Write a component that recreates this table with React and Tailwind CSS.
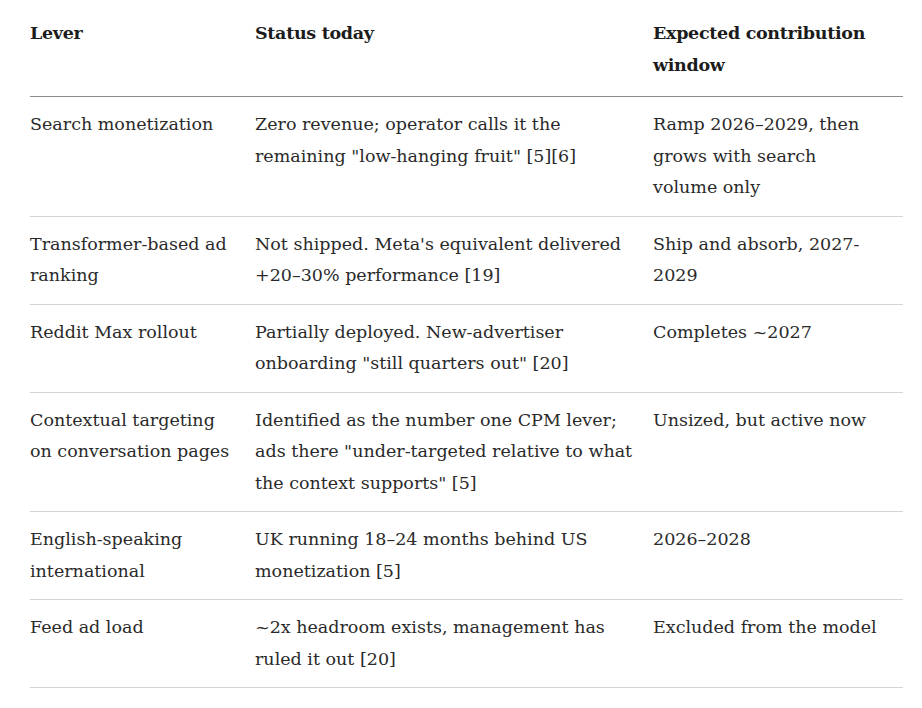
import React from "react";

const rows = [
  ["Search monetization", 'Zero revenue; operator calls it the remaining "low-hanging fruit" [5][6]', "Ramp 2026–2029, then grows with search volume only"],
  ["Transformer-based ad ranking", "Not shipped. Meta's equivalent delivered +20–30% performance [19]", "Ship and absorb, 2027-2029"],
  ["Reddit Max rollout", 'Partially deployed. New-advertiser onboarding "still quarters out" [20]', "Completes ~2027"],
  ["Contextual targeting on conversation pages", 'Identified as the number one CPM lever; ads there "under-targeted relative to what the context supports" [5]', "Unsized, but active now"],
  ["English-speaking international", "UK running 18–24 months behind US monetization [5]", "2026–2028"],
  ["Feed ad load", "~2x headroom exists, management has ruled it out [20]", "Excluded from the model"],
];

export default function App() {
  return (
    <div
      className="min-h-[708px] bg-white pl-[30px] pt-[6px] text-[#2a2a2a]"
      style={{ fontFamily: '"DejaVu Serif", "Liberation Serif", serif' }}
    >
      <div className="w-[873px] text-[17.5px] leading-[31.5px]">
        <div className="grid grid-cols-[225px_398px_250px] border-b border-[#8c8c8c]">
          <div className="pt-3 pb-[15px] pr-6 font-bold text-[#1c1c1c] tracking-[-0.3px]">Lever</div>
          <div className="pt-3 pb-[15px] pr-4 font-bold text-[#1c1c1c] tracking-[-0.3px]">Status today</div>
          <div className="pt-3 pb-[15px] pr-6 font-bold text-[#1c1c1c] tracking-[-0.3px]">Expected contribution window</div>
        </div>
        {rows.map((r, i) => (
          <div key={i} className="grid grid-cols-[225px_398px_250px] border-b border-[#d4d4d4]">
            <div className="py-3 pr-6">{r[0]}</div>
            <div className="py-3 pr-4">{r[1]}</div>
            <div className="py-3 pr-6">{r[2]}</div>
          </div>
        ))}
      </div>
    </div>
  );
}
